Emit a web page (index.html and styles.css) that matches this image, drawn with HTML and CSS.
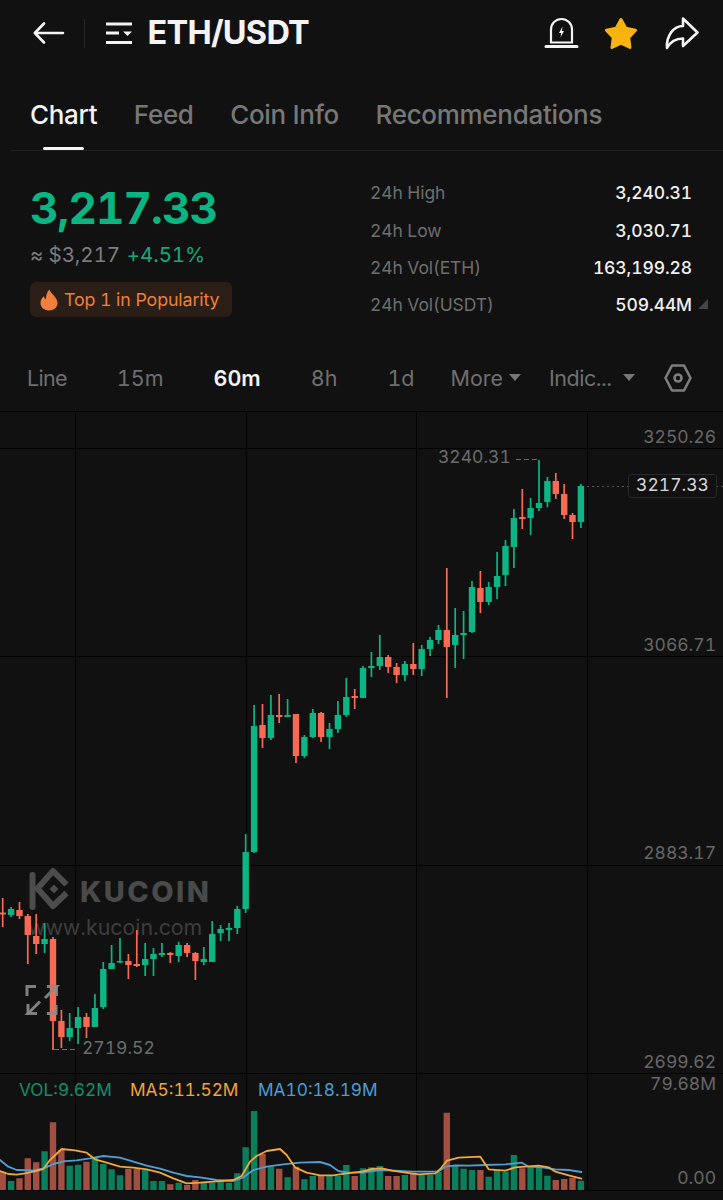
FILE: index.html
```html
<!DOCTYPE html>
<html lang="en">
<head>
<meta charset="utf-8">
<title>ETH/USDT</title>
<link rel="stylesheet" href="styles.css">
</head>
<body>
<div class="page">
  <header class="header">
    <svg class="ic-back" viewBox="0 0 31 22" width="31" height="22"><path d="M30 11H2M11 1.500L1.800 11L11 20.500"/></svg>
    <span class="divider"></span>
    <svg class="ic-menu" viewBox="0 0 26 22" width="26" height="22"><path d="M0 2H26M0 11H13M0 20.500H26"/><path class="fill" d="M17 9.500H26L21.500 14Z"/></svg>
    <h1 class="title">ETH/USDT</h1>
    <div class="header-actions">
      <svg class="ic-bell" viewBox="0 0 31 30" width="31" height="30"><path d="M5 24.500V11.500A10.500 10.500 0 0 1 26 11.500V24.500Z"/><path class="thick" d="M0 28.500H31"/><path class="fill" d="M16.500 8.500L13 15H15.200L14.500 19.500L18 13H15.800Z"/></svg>
      <svg class="ic-star" viewBox="0 0 34 32" width="34" height="32"><path d="M17 2.500L21.800 11.300L31.500 13.200L24.700 20.500L26 30.500L17 26.200L8 30.500L9.300 20.500L2.500 13.200L12.200 11.300Z"/></svg>
      <svg class="ic-share" viewBox="0 0 34 32" width="34" height="32"><path d="M18 1.500L32.500 15.500L18 29V21.500C10 21.500 5.500 24.500 2 31C1 19 8.500 9 18 9Z"/></svg>
    </div>
  </header>

  <nav class="tabs">
    <a class="tab is-active">Chart</a>
    <a class="tab">Feed</a>
    <a class="tab">Coin Info</a>
    <a class="tab">Recommendations</a>
  </nav>

  <section class="summary">
    <div class="quote">
      <div class="price">3,217.33</div>
      <div class="sub"><span class="approx">≈ $3,217</span><span class="change">+4.51%</span></div>
      <div class="badge">
        <svg class="ic-flame" viewBox="0 0 18 22" width="18" height="22"><path d="M9.500 0.500C10.500 4.500 17.500 8 17.500 14C17.500 18.500 13.800 21.500 9 21.500C4.200 21.500 0.500 18.500 0.500 14C0.500 10.800 2.300 8.800 3.800 7C4.200 8.800 5 9.800 6 10.300C5.800 6.500 7 3 9.500 0.500Z"/></svg>
        <span>Top 1 in Popularity</span>
      </div>
    </div>
    <dl class="stats">
      <div class="stat"><dt>24h High</dt><dd>3,240.31</dd></div>
      <div class="stat"><dt>24h Low</dt><dd>3,030.71</dd></div>
      <div class="stat"><dt>24h Vol(ETH)</dt><dd>163,199.28</dd></div>
      <div class="stat"><dt>24h Vol(USDT)</dt><dd>509.44M</dd><i class="corner"></i></div>
    </dl>
  </section>

  <div class="intervals">
    <span class="iv iv-line">Line</span>
    <span class="iv">15m</span>
    <span class="iv is-active">60m</span>
    <span class="iv">8h</span>
    <span class="iv iv-1d">1d</span>
    <span class="iv iv-more">More<i class="caret"></i></span>
    <span class="iv iv-ind">Indic...<i class="caret caret-wide"></i></span>
    <svg class="ic-hex" viewBox="0 0 28 28" width="28" height="28"><path d="M8 1.500H20L26.500 14L20 26.500H8L1.500 14Z"/><circle cx="14" cy="14" r="3.500"/></svg>
  </div>

  <svg class="chart" viewBox="0 411 723 789" width="723" height="789">
    <path class="grid" d="M0 411.500H723M0 448.500H723M0 656.500H723M0 865.500H723M0 1073.500H723M0 1190.500H723M75.500 411V1190M246.500 411V1190M416.500 411V1190M587.500 411V1190"/>

    <g class="mark">
      <path class="mark-bar" d="M32.500 875V907"/>
      <path class="mark-chev" d="M66.500 884.500L53 871L37.500 888.500L53 906L66.500 893"/>
      <path class="mark-dot" d="M54 884.500L58.500 889L54 893.500L49.500 889Z"/>
      <text class="mark-name" x="80" y="902">KUCOIN</text>
      <text class="mark-url" x="28" y="935">www.kucoin.com</text>
    </g>

    <!-- volume bars -->
    <path class="vol-up" d="M11.100 1181V1190M44.600 1151.300V1190M69.700 1165.700V1190M78.100 1164.700V1190M94.900 1157.300V1190M103.300 1164V1190M111.600 1169.300V1190M120 1175.300V1190M145.200 1170V1190M153.500 1181V1190M161.900 1181V1190M178.700 1182.700V1190M203.800 1182.700V1190M212.200 1182.700V1190M220.600 1181.700V1190M229 1182.700V1190M237.300 1173.300V1190M245.700 1147.300V1190M254.100 1111V1190M270.900 1166.700V1190M287.600 1177.300V1190M304.400 1179.300V1190M312.800 1176V1190M329.500 1176V1190M337.900 1176V1190M346.300 1165V1190M363 1168.300V1190M371.400 1167.300V1190M379.800 1166V1190M404.900 1175V1190M421.700 1175V1190M430.100 1175V1190M438.500 1171.700V1190M455.200 1165V1190M463.600 1168.700V1190M472 1170V1190M488.700 1176.700V1190M497.100 1170V1190M505.500 1171.700V1190M513.900 1155V1190M530.600 1166.700V1190M539 1166.700V1190M547.400 1175.700V1190M580.900 1180.700V1190"/>
    <path class="vol-down" d="M2.700 1171.700V1190M19.500 1178.300V1190M27.800 1158.300V1190M36.200 1162.300V1190M53 1122.300V1190M61.400 1150V1190M86.500 1161.700V1190M128.400 1168.700V1190M136.800 1168.700V1190M170.300 1184.300V1190M187.100 1185V1190M195.400 1180V1190M262.500 1154V1190M279.200 1168.700V1190M296 1166.700V1190M321.100 1176V1190M354.700 1176V1190M388.200 1176V1190M396.600 1176V1190M413.300 1173.300V1190M446.800 1112.700V1190M480.400 1170V1190M522.300 1168.300V1190M555.800 1180V1190M564.200 1179V1190M572.500 1177.700V1190"/>

    <g transform="translate(0 1070) scale(.33333)">
      <polyline class="ma ma10" points="0,270 25,290 50,300 100,301 130,296 160,282 190,274 230,271 270,265 310,258 360,263 400,275 440,287 480,296 520,308 560,318 600,322 650,330 700,333 730,322 760,300 800,290 850,283 900,278 960,276 990,285 1015,303 1040,307 1086,308"/>
      <polyline class="ma ma5" points="0,303 25,312 50,314 75,310 100,305 130,297 150,270 185,237 225,241 260,248 285,268 320,278 360,290 400,293 440,298 480,308 520,325 560,340 600,338 650,334 700,330 725,318 750,275 770,258 800,243 840,237 860,255 885,292 920,308 960,316 1000,316 1040,310 1086,305"/>
    </g>
    <g transform="translate(362 1070) scale(.33333)">
      <polyline class="ma ma10" points="0,308 30,303 60,300 100,302 150,305 200,305 230,304 250,290 280,286 320,287 370,285 430,283 480,278 500,290 540,292 580,298 620,300 658,306"/>
      <polyline class="ma ma5" points="0,305 30,297 60,295 90,302 130,308 170,313 220,310 235,297 255,272 290,263 355,260 380,298 430,302 460,292 490,290 530,287 560,292 580,305 620,316 658,326"/>
    </g>

    <!-- candle wicks -->
    <path class="wick-up" d="M11.100 907V917M44.600 923V953M69.700 1013V1041M78.100 1007V1044M94.900 994V1027M103.300 962V1009M111.600 945V969M120 938V963M145.200 943V976M153.500 948V976M161.900 943V957M178.700 942V962M203.800 947V965M212.200 921V962M220.600 925V941M229 923V941M237.300 906V934M245.700 834V913M254.100 705V853M270.900 695V740M287.600 699V717M304.400 735V758M312.800 709V738M329.500 723V749M337.900 701V733M346.300 678V717M363 666V698M371.400 652V677M379.800 635V670M404.900 661V681M421.700 645V676M430.100 637V656M438.500 625V644M455.200 608V668M463.600 611V659M472 581V633M488.700 582V605M497.100 552V599M505.500 540V586M513.900 509V568M530.600 498V535M539 460V511M547.400 477V507M580.900 484V528"/>
    <path class="wick-down" d="M2.700 898V927M19.500 902V919M27.800 914V964M36.200 914V954M53 937V1050M61.400 1010V1048M86.500 1013V1038M128.400 954V979M136.800 930V967M170.300 952V963M187.100 943V957M195.400 952V980M262.500 704V748M279.200 694V723M296 714V763M321.100 712V742M354.700 689V709M388.200 655V673M396.600 663V683M413.300 643V675M446.800 568V698M480.400 571V613M522.300 489V529M555.800 473V499M564.200 484V519M572.500 513V539"/>
    <!-- candle bodies -->
    <path class="body-up" d="M11.100 909V915M44.600 939V944M69.700 1028V1037M78.100 1017V1028M94.900 1008V1027M103.300 969V1007M111.600 963V969M120 961V962.500M145.200 959V965M153.500 954V959M161.900 953V955M178.700 945V956M203.800 959V962M212.200 934V962M220.600 929V933M229 928V930M237.300 909V928M245.700 909V852M254.100 726V852M270.900 715V738M287.600 715V717M304.400 737V756M312.800 713V737M329.500 729V737M337.900 715V729M346.300 697V715M363 668V698M371.400 666V668M379.800 657V666M404.900 664V675M421.700 649V669M430.100 640V649M438.500 630V640M455.200 635V645M463.600 633V635M472 587V632M488.700 587V602M497.100 576V587M505.500 546V575M513.900 518V547M530.600 508V518M539 503V508M547.400 481V502M580.900 486V522"/>
    <path class="body-down" d="M2.700 912.500V914.500M19.500 910V916M27.800 916V935M36.200 936V944M53 939V1021M61.400 1021V1037M86.500 1017V1027M128.400 961V965M136.800 964V966M170.300 953V955M187.100 945V953M195.400 953V961M262.500 725V738M279.200 715V717M296 714V756M321.100 713V737M354.700 696V698M388.200 657V667M396.600 667V675M413.300 664V669M446.800 630V647M480.400 588V602M522.300 517V519M555.800 481V494M564.200 494V515M572.500 515V522"/>

    <!-- right axis -->
    <g class="axis">
      <text x="716" y="443">3250.26</text>
      <text x="716" y="651">3066.71</text>
      <text x="716" y="859">2883.17</text>
      <text x="716" y="1068">2699.62</text>
      <text x="716" y="1090">79.68M</text>
      <text x="716" y="1184">0.00</text>
    </g>

    <text class="extreme" x="438" y="463">3240.31</text>
    <path class="extreme-dash" d="M516 459.500H539"/>
    <text class="extreme" x="82" y="1054">2719.52</text>
    <path class="extreme-dash" d="M54 1049.500H77"/>

    <path class="last-line" d="M587 486.500H628M716 486.500H723"/>
    <rect class="last-box" x="628.500" y="474.500" width="88" height="23" rx="3"/>
    <text class="last-text" x="672.500" y="491">3217.33</text>

    <text class="legend l-vol" x="19" y="1096">VOL:9.62M</text>
    <text class="legend l-ma5" x="130" y="1096">MA5:11.52M</text>
    <text class="legend l-ma10" x="258" y="1096">MA10:18.19M</text>

    <path class="expand" d="M27 996V986.500H36M47 986.500H56.500L45 998M56 1005V1013.500H47M37 1013.500H28L40 1001.500"/>
    <path class="expand" d="M28 1004V1013.500M56.500 986.500V996"/>
  </svg>
</div>
</body>
</html>
```

FILE: styles.css
```css
* { box-sizing: border-box; }
html, body { margin: 0; padding: 0; background: #111111; }
body { font-family: Inter, "Liberation Sans", sans-serif; color: #eeeeee; font-variant-numeric: tabular-nums; }
.page { width: 723px; height: 1200px; overflow: hidden; background: #111111; }

/* header */
.header { display: flex; align-items: center; height: 66px; padding: 0 24px 0 33px; }
.header svg { flex: none; overflow: visible; }
.ic-back path { fill: none; stroke: #f4f4f4; stroke-width: 2.6; stroke-linecap: round; stroke-linejoin: round; }
.divider { width: 1px; height: 29px; margin-left: 20px; background: #252525; }
.ic-menu { margin-left: 21px; }
.ic-menu path { fill: none; stroke: #f4f4f4; stroke-width: 3; }
.ic-menu path.fill { fill: #f4f4f4; stroke: none; }
.title { margin: 0 0 0 15.500px; font-size: 32.500px; line-height: 40px; font-weight: 700; letter-spacing: -0.75px; color: #f4f4f4; }
.header-actions { display: flex; align-items: center; margin-left: auto; }
.ic-bell path { fill: none; stroke: #f4f4f4; stroke-width: 2.2; }
.ic-bell path.thick { stroke-width: 3; stroke-linecap: round; }
.ic-bell path.fill { fill: #f4f4f4; stroke: none; }
.ic-star { margin-left: 27px; }
.ic-star path { fill: #f9b30f; stroke: #f9b30f; stroke-width: 3; stroke-linejoin: round; }
.ic-share { margin-left: 27px; }
.ic-share path { fill: none; stroke: #f4f4f4; stroke-width: 2.6; stroke-linejoin: round; }

/* tabs */
.tabs { display: flex; align-items: center; gap: 36.500px; height: 85px; margin-left: 11px; padding: 13px 0 0 19px; border-bottom: 1px solid #1f1f1f; }
.tab { position: relative; font-size: 26px; line-height: 30px; font-weight: 500; letter-spacing: -0.3px; color: #777777; }
.tab.is-active { color: #f4f4f4; }
.tab.is-active::after { content: ""; position: absolute; left: 13px; width: 41px; height: 3px; bottom: -20px; border-radius: 2px; background: #f4f4f4; }

/* summary */
.summary { display: flex; height: 194px; padding: 23px 31px 0 30px; }
.quote { width: 340px; flex: none; }
.price { margin-top: 13px; font-size: 44px; line-height: 42px; font-weight: 700; letter-spacing: -0.9px; color: #0bb582; }
.sub { display: flex; gap: 7px; margin-top: 13px; font-size: 20.500px; letter-spacing: -0.1px; line-height: 26px; }
.approx { color: #7c7c7c; }
.change { color: #17a77a; }
.badge { display: inline-flex; align-items: center; gap: 6px; height: 35px; margin-top: 14px; padding: 0 13px 0 10px; border-radius: 6px; background: #2a1e16; font-size: 17.800px; letter-spacing: -0.1px; color: #ee803c; }
.ic-flame path { fill: #f0803c; }
.stats { flex: 1; margin: 0; }
.stat { position: relative; display: flex; justify-content: space-between; align-items: center; height: 37.400px; font-size: 17.500px; }
.stat dt { color: #6e6e6e; letter-spacing: -0.1px; }
.stat dd { margin: 0; font-weight: 500; letter-spacing: -0.1px; color: #f0f0f0; }
.corner { position: absolute; left: 328px; top: 13px; width: 0; height: 0; border-style: solid; border-width: 0 0 10px 10px; border-color: transparent transparent #444444 transparent; }

/* intervals */
.intervals { display: flex; align-items: center; gap: 50px; height: 66px; padding: 0 0 0 27px; font-size: 21.500px; color: #6f6f6f; }
.iv { display: inline-flex; align-items: center; line-height: 28px; }
.iv-line { letter-spacing: -0.7px; }
.iv.is-active { font-weight: 600; color: #f4f4f4; }
.iv-more { margin-left: -14px; }
.iv-ind { margin-left: -22px; letter-spacing: -0.5px; }
.caret { width: 0; height: 0; margin-left: 6px; margin-bottom: 2px; border-style: solid; border-width: 7px 6.500px 0 6.500px; border-color: #777777 transparent transparent transparent; }
.caret-wide { margin-left: 11px; }
.ic-hex { margin-left: -21px; flex: none; }
.ic-hex path, .ic-hex circle { fill: none; stroke: #7d7d7d; stroke-width: 2.6; stroke-linejoin: round; }

/* chart */
.chart { display: block; font-family: Inter, "Liberation Sans", sans-serif; }
.grid { fill: none; stroke: #030303; stroke-width: 1; }
.mark-bar { fill: none; stroke: #4c4c4c; stroke-width: 6; stroke-linecap: round; }
.mark-chev { fill: none; stroke: #4c4c4c; stroke-width: 6; stroke-linejoin: round; }
.mark-dot { fill: #4c4c4c; }
.mark-name { font-size: 29px; font-weight: 800; letter-spacing: 2.400px; fill: #4a4a4a; }
.mark-url { font-size: 21.300px; fill: #3e3e3e; }
.vol-up { fill: none; stroke: #0b7f5c; stroke-width: 6.400; }
.vol-down { fill: none; stroke: #a24f42; stroke-width: 6.400; }
.ma { fill: none; stroke-width: 5.500; stroke-linejoin: round; stroke-linecap: round; }
.ma5 { stroke: #f3a73c; }
.ma10 { stroke: #4f9fd3; }
.wick-up { fill: none; stroke: #0cb583; stroke-width: 1.700; }
.wick-down { fill: none; stroke: #fa6a53; stroke-width: 1.700; }
.body-up { fill: none; stroke: #0cb583; stroke-width: 6.400; }
.body-down { fill: none; stroke: #fa6a53; stroke-width: 6.400; }
.axis text { font-size: 17.500px; fill: #676767; text-anchor: end; }
.extreme { font-size: 17.500px; fill: #6c6c6c; }
.extreme-dash { fill: none; stroke: #6c6c6c; stroke-width: 1.200; stroke-dasharray: 5 3; }
.last-line { fill: none; stroke: #555555; stroke-width: 1; stroke-dasharray: 2 3; }
.last-box { fill: #111111; stroke: #2a2a2a; stroke-width: 1; }
.last-text { font-size: 17.500px; fill: #d6d6d6; text-anchor: middle; }
.legend { font-size: 17.300px; }
.l-vol { fill: #12906b; }
.l-ma5 { fill: #efa43c; }
.l-ma10 { fill: #4a9ed4; }
.expand { fill: none; stroke: #8c8c8c; stroke-width: 3; opacity: .9; }
```
